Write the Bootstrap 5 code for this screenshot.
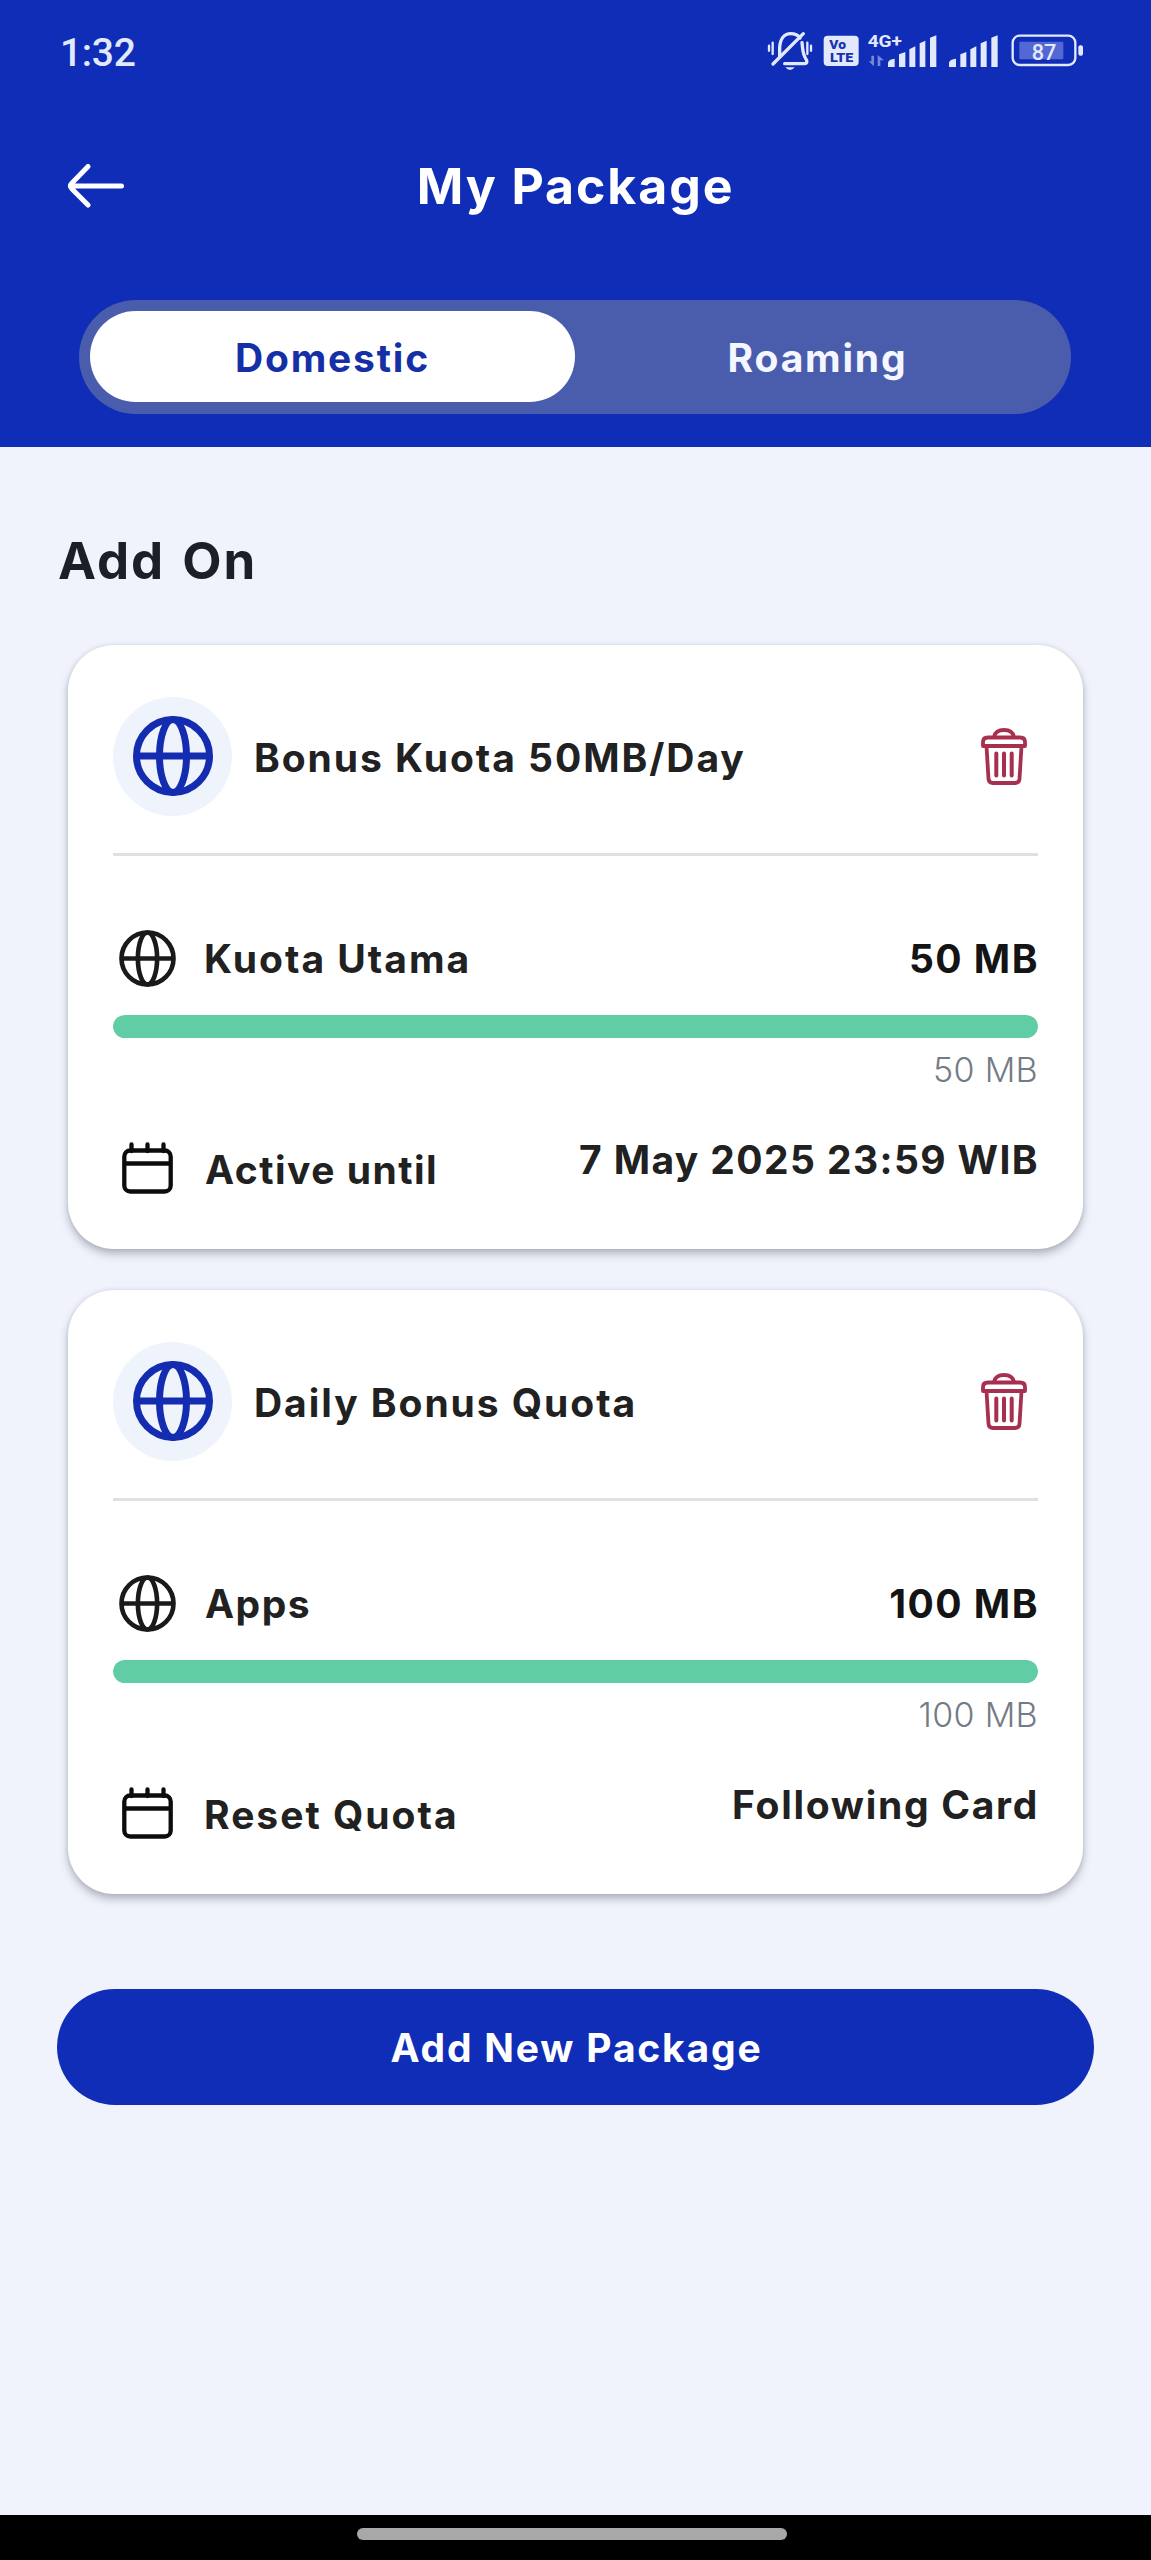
<!DOCTYPE html>
<html lang="en">
<head>
<meta charset="utf-8">
<meta name="viewport" content="width=device-width, initial-scale=1">
<title>My Package</title>
<link href="https://cdn.jsdelivr.net/npm/bootstrap@5.3.0/dist/css/bootstrap.min.css" rel="stylesheet">
<style>
body{font-family:Inter,"Open Sans",sans-serif;background:#f0f3fc;color:#212121;min-height:2560px;font-size:39px;font-weight:700;letter-spacing:2px}
svg{display:block;flex:none;letter-spacing:0}
.app-top{background:#0f2db6;height:447px}
.status{height:106px;padding:0 31px 0 60px;color:#e2e9fd;font-family:Roboto,sans-serif}
.clock{font-size:39px;font-weight:500;line-height:106px;letter-spacing:-.3px}
.sys-icons{padding-top:10px}
.title-row{height:160px;padding:0 68px 0 67px}
.title-row h1{font-size:50px;font-weight:700;line-height:60px;letter-spacing:1.9px;padding-left:1px}
.side{width:57px}
.switcher{margin:34px 80px 0 79px;height:114px;padding:11px;border-radius:57px;background:#4a5dad}
.switcher .nav-link{height:91px;line-height:93px;padding:0;border-radius:46px;color:#f4f7ff;font-weight:700;letter-spacing:1.8px}
.switcher .nav-link.active{background:#fff;color:#1530a6}
.content{padding:83px 57px 0}
.content h2{font-size:51px;font-weight:700;line-height:61px;margin:0 0 53.5px 1px;color:#1b1f27;letter-spacing:2px;word-spacing:3px}
.pkg{margin:0 11px 41px 11px;height:604px;border:0;border-radius:46px;padding:52px 45px 0 45px;box-shadow:0 5px 9px rgba(60,65,80,.34),0 0 4px rgba(60,65,80,.12);color:#212121}
.disc{width:119px;height:119px;background:#eff3fc}
.pkg-name{margin-left:22px;line-height:60px;padding-top:3px;letter-spacing:1.95px}
.trash{margin-right:11px}
.rule{height:3px;background:#e0e0e0;margin:37px 0 74px}
.usage{height:58px}
.ico{margin-left:6px;width:57px}
.lbl{margin-left:28px;line-height:60px}
.lbl-flat{margin-left:29px;letter-spacing:1.5px}
.amount{color:#141414;font-weight:700;line-height:60px;letter-spacing:1.5px;margin-right:-1px}
.progress{height:23px;border-radius:12px;margin:27px 0 12px;background:#dff5ed}
.progress-bar{background:#61cda5;border-radius:12px}
.total{font-size:34px;font-weight:300;line-height:40px;color:#737b85;letter-spacing:.3px}
.expiry{margin-top:50px}
.expiry .value{line-height:40px;letter-spacing:1.7px;margin-right:-1px}
.expiry .value-date{letter-spacing:1.4px}
.expiry .ico{height:60px;padding:2px 3px}
.cta{height:116px;border-radius:58px;background:#0f2db6;color:#fff;font-size:39px;font-weight:700;letter-spacing:1.8px;margin-top:54px;padding:3px 0 0 2px}
.home-bar{height:45px;background:#000;padding-top:13px}
.home-bar div{width:430px;height:12px;border-radius:6px;background:#a8a8a8;margin-left:357px}
</style>
</head>
<body class="d-flex flex-column">
<svg width="0" height="0" class="d-none">
  <symbol id="globe" viewBox="0 0 80 80"><g fill="none" stroke="currentColor"><circle cx="40" cy="40" r="36.500"/><ellipse cx="40" cy="40" rx="13.500" ry="36.500"/><path d="M4 40H76"/></g></symbol>
  <symbol id="bin" viewBox="0 0 46 57"><g fill="none" stroke="#a8304f" stroke-width="3.800" stroke-linejoin="round" stroke-linecap="round"><path d="M13 9C14 4 18 2 23 2S32 4 33 9"/><path d="M2 18V14Q2 9.500 7 9.500H39Q44 9.500 44 14V18Z"/><path d="M5.500 18L7.500 51Q8 55 12 55H34Q38 55 38.500 51L40.500 18"/><path d="M15.300 25.500V47.500M23 25.500V47.500M30.700 25.500V47.500" stroke-width="4"/></g></symbol>
  <symbol id="cal" viewBox="0 0 51 52"><g fill="none" stroke="#0c0c0c" stroke-width="4.300"><rect x="2.300" y="8.500" width="46.400" height="41" rx="6"/><path d="M2 21.500H49"/><path d="M9.500 2.500V9M25.500 2.500V9M41.500 2.500V9" stroke-linecap="round"/></g></symbol>
</svg>

<header class="app-top">
  <div class="status d-flex justify-content-between">
    <span class="clock">1:32</span>
    <div class="sys-icons d-flex">
      <svg width="52" height="80" viewBox="75 0 156 240" fill="none" stroke="#e2e9fd" stroke-width="10" stroke-linecap="round"><path d="M119 138V112C121 85 134 71 152 71C165 71 174 75 180 84M186 98C189 123 187 132 200 151Q202 161 195 161H134"/><path d="M99 162L190 71"/><path d="M136 172H164Q158 180 150 180T136 172Z" fill="#e2e9fd" stroke="none"/><path d="M98 98V132M202 98V132M87 107V122M213 107V122" stroke-width="7"/></svg>
      <svg width="46" height="80" viewBox="231 0 138 240"><rect x="251" y="77" width="105" height="91" rx="12" fill="#e2e9fd"/><g fill="#1733ae" font-family="Roboto,sans-serif" font-weight="900"><text x="268" y="116" font-size="36" textLength="50" lengthAdjust="spacingAndGlyphs">Vo</text><text x="270" y="156" font-size="36" textLength="70" lengthAdjust="spacingAndGlyphs">LTE</text></g></svg>
      <svg width="78" height="80" viewBox="369 0 234 240" fill="#e2e9fd"><text x="383" y="111" font-family="Roboto,sans-serif" font-weight="700" font-size="50" textLength="103" lengthAdjust="spacingAndGlyphs">4G+</text><path d="M394 137h8v32l-16-15h8zM413 168h8v-17h11l-19-16z" fill="#7587dc"/><path d="M444 158Q446 148 464 146V171H444ZM477 133L496 126V171H477ZM508 118L526 109V171H508ZM539 100L556 92V171H539ZM570 83L589 76V171H570Z"/></svg>
      <svg width="63" height="80" viewBox="603 0 189 240" fill="#e2e9fd"><path d="M627 158Q629 148 648 146V171H627ZM661 133L679 126V171H661ZM691 118L709 109V171H691ZM722 100L740 92V171H722ZM754 83L773 76V171H754Z"/></svg>
      <svg width="116" height="80" viewBox="792 0 348 240"><rect x="818" y="77" width="188" height="88" rx="21" fill="none" stroke="#e2e9fd" stroke-width="7"/><rect x="838" y="95" width="132" height="53" rx="4" fill="#5368d2"/><rect x="1015" y="106" width="14" height="31" rx="6" fill="#e2e9fd"/><text x="875" y="151" font-family="Roboto,sans-serif" font-weight="500" font-size="68" textLength="74" lengthAdjust="spacingAndGlyphs" fill="#e2e9fd">87</text></svg>
    </div>
  </div>
  <div class="title-row d-flex align-items-center justify-content-between text-white">
    <a href="#" class="side text-white" aria-label="Back"><svg width="57" height="44" viewBox="0 0 57 44" fill="none" stroke="#fff" stroke-width="5" stroke-linecap="round" stroke-linejoin="round"><path d="M21 2.500L5 19Q2 22 5 25L21 41M4 22H54.500"/></svg></a>
    <h1 class="m-0">My Package</h1>
    <span class="side"></span>
  </div>
  <nav class="switcher nav nav-pills nav-justified">
    <a class="nav-link nav-item active" href="#">Domestic</a>
    <a class="nav-link nav-item" href="#">Roaming</a>
  </nav>
</header>

<main class="content flex-grow-1">
  <h2>Add On</h2>

  <section class="card pkg">
    <div class="d-flex align-items-center">
      <div class="disc rounded-circle d-flex align-items-center justify-content-center"><svg width="80" height="80" color="#142db0" stroke-width="7"><use href="#globe"/></svg></div>
      <span class="pkg-name me-auto">Bonus Kuota 50MB/Day</span>
      <svg class="trash" width="46" height="57"><use href="#bin"/></svg>
    </div>
    <div class="rule"></div>
    <div class="usage d-flex align-items-center">
      <div class="ico"><svg width="57" height="57" color="#1a1a1a" stroke-width="6.500"><use href="#globe"/></svg></div>
      <span class="lbl me-auto">Kuota Utama</span>
      <span class="amount">50 MB</span>
    </div>
    <div class="progress"><div class="progress-bar w-100"></div></div>
    <div class="total text-end">50 MB</div>
    <div class="expiry d-flex align-items-start">
      <div class="ico"><svg width="51" height="52"><use href="#cal"/></svg></div>
      <span class="lbl lbl-flat me-auto">Active until</span>
      <span class="value value-date">7 May 2025 23:59 WIB</span>
    </div>
  </section>

  <section class="card pkg">
    <div class="d-flex align-items-center">
      <div class="disc rounded-circle d-flex align-items-center justify-content-center"><svg width="80" height="80" color="#142db0" stroke-width="7"><use href="#globe"/></svg></div>
      <span class="pkg-name me-auto">Daily Bonus Quota</span>
      <svg class="trash" width="46" height="57"><use href="#bin"/></svg>
    </div>
    <div class="rule"></div>
    <div class="usage d-flex align-items-center">
      <div class="ico"><svg width="57" height="57" color="#1a1a1a" stroke-width="6.500"><use href="#globe"/></svg></div>
      <span class="lbl lbl-flat me-auto">Apps</span>
      <span class="amount">100 MB</span>
    </div>
    <div class="progress"><div class="progress-bar w-100"></div></div>
    <div class="total text-end">100 MB</div>
    <div class="expiry d-flex align-items-start">
      <div class="ico"><svg width="51" height="52"><use href="#cal"/></svg></div>
      <span class="lbl me-auto">Reset Quota</span>
      <span class="value">Following Card</span>
    </div>
  </section>

  <button class="btn cta w-100" type="button">Add New Package</button>
</main>
<footer class="home-bar"><div></div></footer>
<script src="https://cdn.jsdelivr.net/npm/bootstrap@5.3.0/dist/js/bootstrap.bundle.min.js"></script>
</body>
</html>
